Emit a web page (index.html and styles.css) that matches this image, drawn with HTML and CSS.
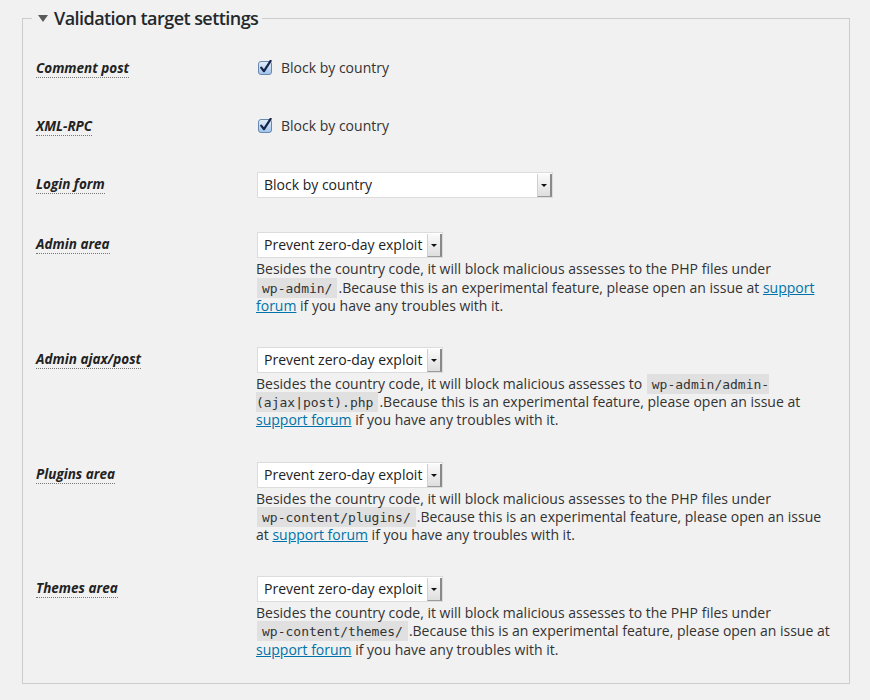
FILE: index.html
```html
<!DOCTYPE html>
<html lang="en">
<head>
<meta charset="utf-8">
<title>Validation target settings</title>
<link rel="stylesheet" href="styles.css">
</head>
<body>
<fieldset class="settings">
  <legend class="settings-title"><span class="caret"></span>Validation target settings</legend>

  <div class="row">
    <div class="row-label"><span class="term">Comment post</span></div>
    <div class="row-field">
      <label class="check"><span class="box"><svg width="15" height="15" viewBox="0 0 15 15"><defs><linearGradient id="g1" x1="0" y1="0" x2="0" y2="1"><stop offset="0" stop-color="#e3effb"/><stop offset="1" stop-color="#9fc3ea"/></linearGradient></defs><rect x="0.5" y="1.5" width="13" height="13" rx="2.5" fill="url(#g1)" stroke="#6a88ad"/><path d="M3.2 7.6 L6 11.2 L12.6 0.8" fill="none" stroke="#16264a" stroke-width="2.2" stroke-linecap="round" stroke-linejoin="round"/></svg></span>Block by country</label>
    </div>
  </div>

  <div class="row">
    <div class="row-label"><span class="term">XML-RPC</span></div>
    <div class="row-field">
      <label class="check"><span class="box"><svg width="15" height="15" viewBox="0 0 15 15"><defs><linearGradient id="g2" x1="0" y1="0" x2="0" y2="1"><stop offset="0" stop-color="#e3effb"/><stop offset="1" stop-color="#9fc3ea"/></linearGradient></defs><rect x="0.5" y="1.5" width="13" height="13" rx="2.5" fill="url(#g2)" stroke="#6a88ad"/><path d="M3.2 7.6 L6 11.2 L12.6 0.8" fill="none" stroke="#16264a" stroke-width="2.2" stroke-linecap="round" stroke-linejoin="round"/></svg></span>Block by country</label>
    </div>
  </div>

  <div class="row">
    <div class="row-label"><span class="term">Login form</span></div>
    <div class="row-field">
      <div class="select select--wide"><span class="select-value">Block by country</span><span class="select-btn"></span></div>
    </div>
  </div>

  <div class="row">
    <div class="row-label"><span class="term">Admin area</span></div>
    <div class="row-field">
      <div class="select"><span class="select-value">Prevent zero-day exploit</span><span class="select-btn"></span></div>
      <div class="description">Besides the country code, it will block malicious assesses to the PHP files under <code class="nowrap">wp-admin/</code>.Because this is an experimental feature, please open an issue at <a href="#">support forum</a> if you have any troubles with it.</div>
    </div>
  </div>

  <div class="row">
    <div class="row-label"><span class="term">Admin ajax/post</span></div>
    <div class="row-field">
      <div class="select"><span class="select-value">Prevent zero-day exploit</span><span class="select-btn"></span></div>
      <div class="description">Besides the country code, it will block malicious assesses to <code>wp-admin/admin-(ajax|post).php</code>.Because this is an experimental feature, please open an issue at <a href="#">support forum</a> if you have any troubles with it.</div>
    </div>
  </div>

  <div class="row">
    <div class="row-label"><span class="term">Plugins area</span></div>
    <div class="row-field">
      <div class="select"><span class="select-value">Prevent zero-day exploit</span><span class="select-btn"></span></div>
      <div class="description">Besides the country code, it will block malicious assesses to the PHP files under <code class="nowrap">wp-content/plugins/</code>.Because this is an experimental feature, please open an issue at <a href="#">support forum</a> if you have any troubles with it.</div>
    </div>
  </div>

  <div class="row">
    <div class="row-label"><span class="term">Themes area</span></div>
    <div class="row-field">
      <div class="select"><span class="select-value">Prevent zero-day exploit</span><span class="select-btn"></span></div>
      <div class="description">Besides the country code, it will block malicious assesses to the PHP files under <code class="nowrap">wp-content/themes/</code>.Because this is an experimental feature, please open an issue at <a href="#">support forum</a> if you have any troubles with it.</div>
    </div>
  </div>
</fieldset>
</body>
</html>
```

FILE: styles.css
```css
html, body {
  margin: 0;
  padding: 0;
  background: #f1f1f1;
}
body {
  font-family: "Open Sans", "Liberation Sans", sans-serif;
  font-size: 14px;
  color: #444;
}
.settings {
  margin: 6px 20px 0 22px;
  padding: 9px 15px 9px 13px;
  border: 1px solid #cccccc;
  min-width: 0;
}
.settings-title {
  margin-left: -4px;
  padding: 0 4px 0 6px;
  font-size: 18px;
  line-height: 24px;
  font-weight: 600;
  letter-spacing: -0.55px;
  color: #23282d;
}
.caret {
  display: inline-block;
  width: 0;
  height: 0;
  border-left: 5.5px solid transparent;
  border-right: 5.5px solid transparent;
  border-top: 7px solid #5a5a5a;
  margin-right: 6px;
  vertical-align: 3px;
}
.row {
  display: grid;
  grid-template-columns: 220px 1fr;
  align-items: start;
}
.row-label {
  padding: 20px 0;
  line-height: 18.2px;
}
.term {
  font-size: 13.5px;
  font-weight: 700;
  font-style: italic;
  color: #222;
  border-bottom: 1px dotted #777;
}
.row-field {
  padding: 15px 0;
  line-height: 18.2px;
}
.check {
  display: flex;
  align-items: center;
  margin-top: 5px;
  color: #333;
}
.box {
  display: inline-block;
  width: 15px;
  height: 15px;
  margin: -2px 8px 0 2px;
}
.box svg {
  display: block;
}
.select {
  display: inline-flex;
  box-sizing: border-box;
  height: 26px;
  width: 186px;
  margin: 2px 0 2px 1px;
  background: #fff;
  border: 1px solid #dcdcdc;
  vertical-align: top;
}
.select--wide {
  width: 296px;
}
.select-value {
  flex: 1;
  padding-left: 6px;
  line-height: 24px;
  color: #222;
  white-space: nowrap;
}
.select-btn {
  position: relative;
  width: 12px;
  margin: 1px 0 0 0;
  background: linear-gradient(#fbfbfb, #dedede);
  border-left: 1px solid #d0d0d0;
  border-right: 2px solid #8a8a8a;
  border-bottom: 1px solid #9a9a9a;
}
.select-btn::after {
  content: "";
  position: absolute;
  left: 3px;
  top: 10px;
  border-left: 3px solid transparent;
  border-right: 3px solid transparent;
  border-top: 3px solid #111;
}
.description {
  color: #333;
  line-height: 18.2px;
}
code {
  font-family: "DejaVu Sans Mono", "Liberation Mono", monospace;
  font-size: 13px;
  line-height: 1;
  padding: 3px 5px 2px;
  margin: 0 1px;
  background: rgba(0, 0, 0, 0.07);
  color: #333;
}
.nowrap {
  white-space: nowrap;
}
a {
  color: #0073aa;
  text-decoration: underline;
}
```
